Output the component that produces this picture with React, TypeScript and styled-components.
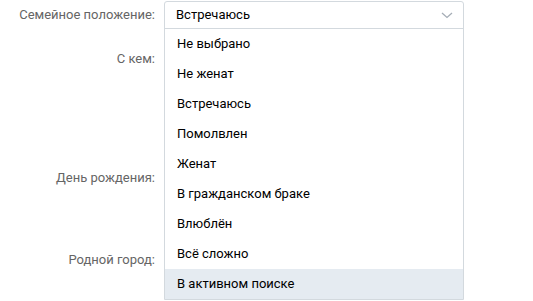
import React from "react";
import styled, { createGlobalStyle } from "styled-components";

const Global = createGlobalStyle`
  html, body { margin: 0; padding: 0; background: #fff; }
  body { font-family: Roboto, "Noto Sans", "Liberation Sans", sans-serif; -webkit-font-smoothing: antialiased; }
`;

const Page = styled.div`
  position: relative;
  width: 533px;
  height: 301px;
  overflow: hidden;
`;

const Form = styled.div`
  display: flex;
  flex-direction: column;
`;

const Row = styled.div<{ $top: number; $h: number }>`
  display: flex;
  align-items: center;
  margin-top: ${(p) => p.$top}px;
  height: ${(p) => p.$h}px;
`;

const Label = styled.div`
  width: 155px;
  text-align: right;
  font-size: 13px;
  color: #656565;
  line-height: 16px;
`;

const Dropdown = styled.div`
  position: absolute;
  left: 164px;
  top: 1px;
  width: 300px;
  box-sizing: border-box;
  border: 1px solid #d3d9de;
  border-radius: 3px 3px 0 0;
  background: #fff;
  font-size: 13px;
  color: #000;
`;

const Header = styled.div`
  display: flex;
  align-items: center;
  justify-content: space-between;
  height: 26px;
  padding: 0 10px 0 11px;
  border-bottom: 1px solid #d3d9de;
`;

const Value = styled.span`
  line-height: 16px;
`;

const Item = styled.div<{ $active?: boolean }>`
  height: 30px;
  display: flex;
  align-items: center;
  padding-left: 12px;
  line-height: 16px;
  background: ${(p) => (p.$active ? "#e5ebf1" : "#fff")};
`;

const options = [
  "Не выбрано",
  "Не женат",
  "Встречаюсь",
  "Помолвлен",
  "Женат",
  "В гражданском браке",
  "Влюблён",
  "Всё сложно",
  "В активном поиске",
];

export default function App() {
  return (
    <Page>
      <Global />
      <Form>
        <Row $top={0} $h={29}>
          <Label>Семейное положение:</Label>
        </Row>
        <Row $top={15} $h={30}>
          <Label>С кем:</Label>
        </Row>
        <Row $top={89} $h={30}>
          <Label>День рождения:</Label>
        </Row>
        <Row $top={52} $h={30}>
          <Label>Родной город:</Label>
        </Row>
      </Form>
      <Dropdown>
        <Header>
          <Value>Встречаюсь</Value>
          <svg width="12" height="7" viewBox="0 0 12 7">
            <path d="M1 1 L6 5.5 L11 1" fill="none" stroke="#a5adb6" strokeWidth="1.3" />
          </svg>
        </Header>
        {options.map((o, i) => (
          <Item key={o} $active={i === options.length - 1}>
            {o}
          </Item>
        ))}
      </Dropdown>
    </Page>
  );
}
